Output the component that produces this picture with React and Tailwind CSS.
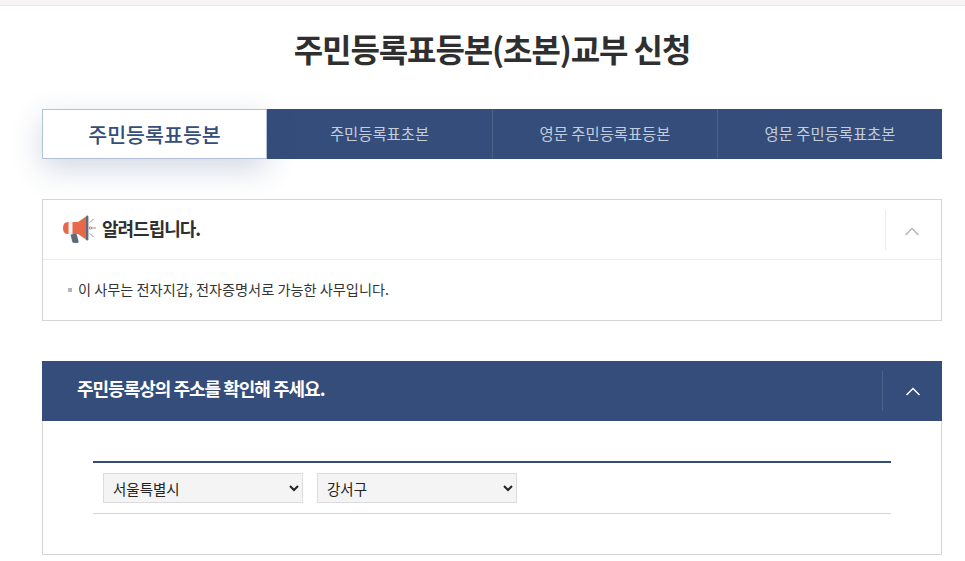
const FONT = { fontFamily: '"Noto Sans CJK KR", "Noto Sans", sans-serif' };

function Chevron({ className }) {
  return (
    <svg width="16" height="9" viewBox="0 0 16 9" fill="none" className={className}>
      <path d="M1.5 8 L8 1.5 L14.5 8" stroke="currentColor" strokeWidth="1.5" />
    </svg>
  );
}

function Megaphone() {
  return (
    <svg width="34" height="30" viewBox="0 0 34 30" fill="none" className="shrink-0">
      <path d="M8 18 L14 18 L16.5 27 Q17 29 14.5 29 L12 29 Q10.5 29 10 27 Z" fill="#5d6b7a" />
      <path d="M6 8 L10 8 L10 20 L6 20 Q1 20 1 14 Q1 8 6 8 Z" fill="#e8694a" />
      <path d="M10 8 L16 8 L24 2.5 L24 25.5 L16 20 L10 20 Z" fill="#e8694a" />
      <rect x="6.5" y="7.5" width="4" height="13" fill="#f2f2f2" />
      <rect x="24" y="1.5" width="2.4" height="25" rx="1.2" fill="#5d6b7a" />
      <g stroke="#8b95a1" strokeWidth="1">
        <path d="M30 14 L34 14" />
        <path d="M28 8.5 L31.5 5" />
        <path d="M28 19.5 L31.5 23" />
      </g>
      <circle cx="28.5" cy="14" r="1.2" fill="#fff" stroke="#e8694a" strokeWidth="1" />
    </svg>
  );
}

function Tab({ children, active, divider }) {
  if (active) {
    return (
      <div className="w-[225px] h-[50px] flex items-center justify-center bg-white border border-[#b4c0d9] text-[#344d7a] text-[20.6px] font-medium shadow-[0_10px_30px_rgba(52,77,122,0.22)] relative">
        {children}
      </div>
    );
  }
  return (
    <div className={`w-[225px] h-[50px] flex items-center justify-center bg-[#344d7a] text-[#c4cddd] text-[15.4px] ${divider ? "border-l border-[#4a618a]" : ""}`}>
      {children}
    </div>
  );
}

function Select({ value }) {
  return (
    <select
      defaultValue={value}
      className="w-[200px] h-[30px] bg-[#f4f4f4] border border-[#dcdcdc] pl-[5px] text-[14.5px] text-[#222] appearance-auto"
      style={FONT}
    >
      <option>{value}</option>
    </select>
  );
}

export default function App() {
  return (
    <div className="w-[965px] h-[561px] overflow-hidden bg-white" style={FONT}>
      <div className="h-[6px] bg-[#f5f3f3] border-b border-[#e9e9e9]" />
      <div className="mx-[42px] w-[900px]">
        <h1 className="mt-[20px] h-[44px] flex items-center justify-center text-[32px] font-bold tracking-[-1.1px] text-[#2f2f2f]">
          주민등록표등본(초본)교부 신청
        </h1>
        <div className="mt-[39px] flex">
          <Tab active>주민등록표등본</Tab>
          <Tab>주민등록표초본</Tab>
          <Tab divider>영문 주민등록표등본</Tab>
          <Tab divider>영문 주민등록표초본</Tab>
        </div>

        <section className="mt-[40px] h-[122px] border border-[#d5d5d5]">
          <div className="h-[60px] flex items-center border-b border-[#ececec]">
            <div className="flex items-center pl-[19px] flex-1 gap-[6px] pb-[2px]">
              <Megaphone />
              <span className="text-[18px] font-bold tracking-[-1px] text-[#2f2f2f]">알려드립니다.</span>
            </div>
            <div className="w-[56px] h-[40px] border-l border-[#ececec] flex items-center justify-center text-[#b5b5b5] pt-[3px] pr-[4px]">
              <Chevron />
            </div>
          </div>
          <div className="flex items-center pl-[25px] pt-[19px] text-[14.2px] text-[#333] gap-[6px]">
            <span className="w-[4px] h-[4px] bg-[#b5b5b5]" />
            <span>이 사무는 전자지갑, 전자증명서로 가능한 사무입니다.</span>
          </div>
        </section>

        <section className="mt-[40px]">
          <div className="h-[60px] bg-[#344d7a] flex items-center">
            <div className="flex-1 pl-[35px] pb-[5px] text-white text-[18px] font-bold tracking-[-1px]">
              주민등록상의 주소를 확인해 주세요.
            </div>
            <div className="w-[60px] h-[40px] border-l border-[#4a618a] flex items-center justify-center text-white">
              <Chevron />
            </div>
          </div>
          <div className="h-[134px] border border-t-0 border-[#d5d5d5] pt-[40px] px-[50px]">
            <div className="border-t-2 border-b border-t-[#344d7a] border-b-[#d5d5d5] h-[53px] flex items-center gap-[14px] pl-[10px]">
              <Select value="서울특별시" />
              <Select value="강서구" />
            </div>
          </div>
        </section>
      </div>
    </div>
  );
}
